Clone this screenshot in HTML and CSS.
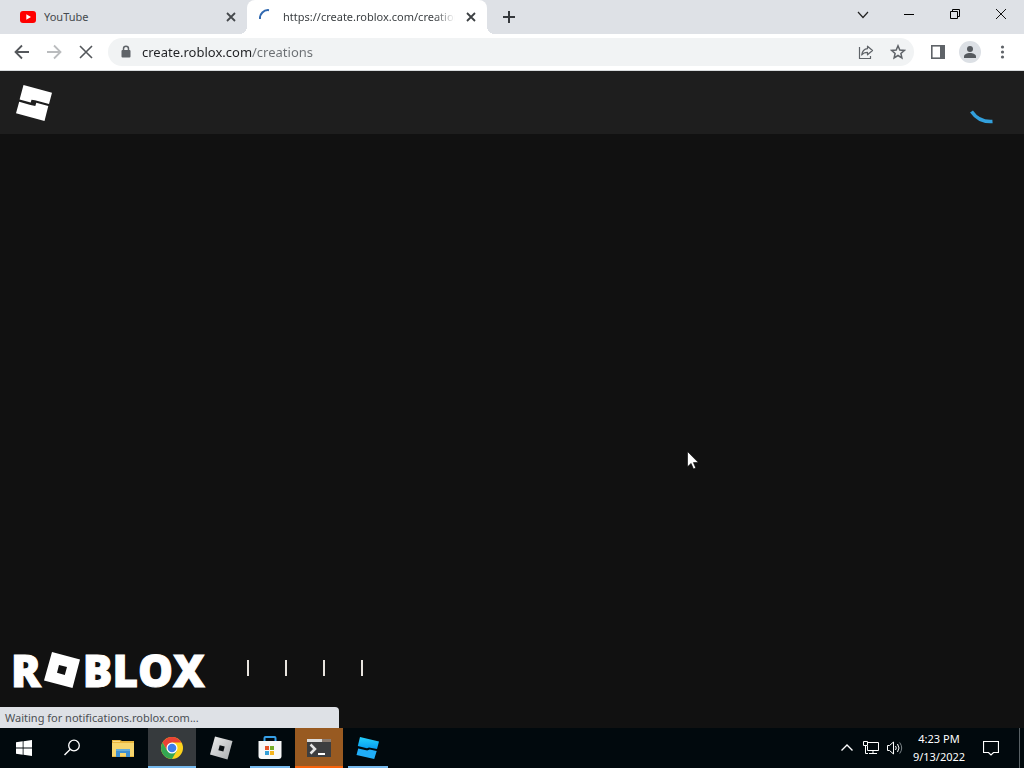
FILE: index.html
```html
<!DOCTYPE html>
<html lang="en">
<head>
<meta charset="utf-8">
<title>Creations</title>
<link rel="stylesheet" href="styles.css">
</head>
<body>
<div class="tabstrip">
  <div class="tab">
    <svg class="favicon" width="16" height="16" viewBox="0 0 16 16"><rect y="2" width="16" height="12" rx="3" fill="#f00"/><path d="M6.300 5.300v5.400L11 8z" fill="#fff"/></svg>
    <span class="tab-title">YouTube</span>
    <button class="tab-close" aria-label="Close YouTube"><svg width="16" height="16" viewBox="0 0 16 16"><path d="M4 4l8 8M12 4l-8 8" stroke="#45484c" stroke-width="1.800"/></svg></button>
  </div>
  <div class="tab tab-active">
    <svg class="favicon" width="16" height="16" viewBox="0 0 16 16"><path d="M1 10A8 8 0 0 1 10 1.200" fill="none" stroke="#3169b0" stroke-width="2"/></svg>
    <span class="tab-title tab-fade">https://create.roblox.com/creations</span>
    <button class="tab-close" aria-label="Close tab"><svg width="16" height="16" viewBox="0 0 16 16"><path d="M4 4l8 8M12 4l-8 8" stroke="#3c4043" stroke-width="1.800"/></svg></button>
  </div>
  <button class="new-tab" aria-label="New tab"><svg width="16" height="16" viewBox="0 0 16 16"><path d="M8 2v12M2 8h12" stroke="#35383c" stroke-width="2"/></svg></button>
  <div class="window-controls">
    <button aria-label="Search tabs"><svg width="16" height="16" viewBox="0 0 16 16"><path d="M3 5l5 5.500L13 5" fill="none" stroke="#222" stroke-width="1.200"/></svg></button>
    <button aria-label="Minimize"><svg width="16" height="16" viewBox="0 0 16 16"><path d="M3 7.500h10" stroke="#000"/></svg></button>
    <button aria-label="Restore"><svg width="16" height="16" viewBox="0 0 16 16"><path d="M3.500 4.500h7v7h-7zM5.500 4V2.500h7v7H11" fill="none" stroke="#000"/></svg></button>
    <button aria-label="Close"><svg width="16" height="16" viewBox="0 0 16 16"><path d="M3 2l10 10M13 2L3 12" stroke="#111"/></svg></button>
  </div>
</div>

<div class="toolbar">
  <button class="tool" aria-label="Back"><svg width="16" height="16" viewBox="0 0 16 16"><path d="M15 8H2M8 1.500L1.500 8 8 14.500" fill="none" stroke="#54575b" stroke-width="1.800"/></svg></button>
  <button class="tool" aria-label="Forward"><svg width="16" height="16" viewBox="0 0 16 16"><path d="M1 8h13M8 1.500L14.500 8 8 14.500" fill="none" stroke="#babcbe" stroke-width="1.800"/></svg></button>
  <button class="tool" aria-label="Stop loading"><svg width="16" height="16" viewBox="0 0 16 16"><path d="M2 2l12 12M14 2L2 14" stroke="#54575b" stroke-width="1.600"/></svg></button>
  <div class="omnibox">
    <svg class="lock" width="12" height="14" viewBox="0 0 12 14"><path d="M3.500 6V3.800a2.500 2.500 0 0 1 5 0V6" fill="none" stroke="#5f6368" stroke-width="1.500"/><rect x="1.500" y="5" width="9" height="7.500" rx="1" fill="#5f6368"/></svg>
    <input class="url" type="text" aria-label="Address" value="create.roblox.com/creations">
    <button class="tool" aria-label="Share"><svg width="16" height="16" viewBox="0 0 16 16"><path d="M1.500 3v11.500h11V12M9.500 2.200L14.500 6.500 9.500 10.800V8.300C7 8.300 5 9 3.700 11 4.200 7.500 6 5 9.500 4.700z" fill="none" stroke="#5f6368" stroke-width="1.200" stroke-linejoin="round"/></svg></button>
    <button class="tool" aria-label="Bookmark"><svg width="16" height="16" viewBox="0 0 16 16"><path d="M8 1.800l1.800 4.200 4.500.4-3.400 3 1 4.500L8 11.500l-3.900 2.400 1-4.500-3.400-3L6.200 6z" fill="none" stroke="#5f6368" stroke-width="1.500"/></svg></button>
  </div>
  <button class="tool" aria-label="Side panel"><svg width="16" height="16" viewBox="0 0 16 16"><rect x="1.800" y="1.800" width="12.400" height="12.400" fill="none" stroke="#5f6368" stroke-width="1.600"/><path d="M10 1h5v14h-5z" fill="#5f6368"/></svg></button>
  <button class="tool" aria-label="Profile"><svg width="22" height="22" viewBox="0 0 22 22"><circle cx="11" cy="11" r="11" fill="#dce0e5"/><circle cx="11" cy="8" r="3" fill="#565a5f"/><path d="M5 17v-1.500C5 13.300 8 12 11 12s6 1.300 6 3.500V17z" fill="#565a5f"/></svg></button>
  <button class="tool" aria-label="Menu"><svg width="16" height="16" viewBox="0 0 16 16" fill="#5f6368"><circle cx="8.500" cy="3" r="1.600"/><circle cx="8.500" cy="8" r="1.600"/><circle cx="8.500" cy="13" r="1.600"/></svg></button>
</div>

<main class="page">
  <header class="site-header">
    <a href="#" class="site-logo" aria-label="Creator home"><svg width="36" height="36" viewBox="0 0 36 36" fill="#fff"><path d="M7.500 0L36 7.800 33 19 19 15.300 15.500 14.800 14.700 17.600 3.600 14.600z"/><path d="M3.200 16.800L14.500 20l4.800 1.100 1-3.300 12 3.200L28.500 36 0 28.300z"/></svg></a>
    <svg class="spinner" width="24" height="16" viewBox="0 0 24 16"><path d="M1.500 1.500Q9 12.500 22.500 11.500" fill="none" stroke="#32a0dc" stroke-width="3.500"/></svg>
  </header>
  <footer class="site-footer">
    <a href="#" class="wordmark" aria-label="Roblox"><span>R</span><svg width="36" height="36" viewBox="0 0 36 36"><path fill="#fff" stroke="none" fill-rule="evenodd" d="M8 0L36 7.500 28.500 36 0 28.500zM15 13L13 20.800l7.800 2.200 2.200-8z"/></svg><span>BLOX</span></a>
    <div class="footer-links"><span></span><span></span><span></span><span></span></div>
  </footer>
  <div class="status">Waiting for notifications.roblox.com...</div>
  <svg class="cursor" width="12" height="19" viewBox="0 0 12 19"><path d="M.500.500v15.300l3.600-3.400L6.500 18l2.300-1-2.400-5.400h5z" fill="#fff" stroke="#000" stroke-width=".600"/></svg>
</main>

<div class="taskbar">
  <button class="task" aria-label="Start"><svg width="16" height="16" viewBox="0 0 16 16" fill="#fff"><path d="M0 2.200L6.700 1.300v6.300H0zM7.500 1.200L16 0v7.600H7.500zM0 8.400h6.700v6.300L0 13.800zM7.500 8.400H16V16l-8.500-1.200z"/></svg></button>
  <button class="task" aria-label="Search"><svg width="18" height="18" viewBox="0 0 18 18"><circle cx="11" cy="6.500" r="5.300" fill="none" stroke="#fff" stroke-width="1.300"/><path d="M7.300 10.300L1.500 16" stroke="#fff" stroke-width="1.400"/></svg></button>
  <div class="apps">
    <button class="task" aria-label="File Explorer"><svg width="22" height="20" viewBox="0 0 22 20"><path d="M0 2h8l2 1h12v16H0z" fill="#e9b63e"/><path d="M0 5h22v13H0z" fill="#f7d66e"/><path d="M1 3h7v1H1z" fill="#f8dc8b"/><path d="M4 11h14v8h-4v-4H8v4H4z" fill="#3f8fd0"/><path d="M4 11h14v2H4z" fill="#65acd9"/></svg></button>
    <button class="task task-current" aria-label="Chrome"><svg width="24" height="24" viewBox="0 0 24 24"><circle cx="12" cy="12" r="11" fill="#fdd31d"/><path d="M2.500 6.500A11 11 0 0 1 21.500 6.500H12L7.300 14.800z" fill="#ea4335"/><path d="M2.500 6.500A11 11 0 0 0 12 23l4.800-8.200L12 17l-4.700-2.200z" fill="#34a853"/><circle cx="12" cy="12" r="5.500" fill="#fff"/><circle cx="12" cy="12" r="4.300" fill="#3e7eea"/></svg></button>
    <button class="task" aria-label="Roblox"><svg width="24" height="24" viewBox="0 0 24 24"><defs><linearGradient id="silver" x2="1" y2="1"><stop stop-color="#f0f0f0"/><stop offset="1" stop-color="#a8abad"/></linearGradient></defs><path d="M6 .500l17.500 4.500L18.500 23.500 1 18.500z" fill="url(#silver)"/><path d="M10.700 9.300l5 1.300-1.300 5-5-1.300z" fill="#080d10"/></svg></button>
    <button class="task task-open" aria-label="Microsoft Store"><svg width="24" height="24" viewBox="0 0 24 24"><path d="M6.500 6V2q0-1 1-1h9q1 0 1 1v4" fill="none" stroke="#36a0e8" stroke-width="2"/><path d="M.500 5h23v15q0 3-3 3h-17q-3 0-3-3z" fill="#f7f8f8"/><path d="M7 10h4v4H7z" fill="#e5542a"/><path d="M12 10h4v4h-4z" fill="#75ad27"/><path d="M7 15h4v4H7z" fill="#35a0d8"/><path d="M12 15h4v4h-4z" fill="#f5b51d"/></svg></button>
    <button class="task task-alert" aria-label="Terminal"><svg width="24" height="20" viewBox="0 0 24 20"><path d="M0 1h24v18H0z" fill="#3d3e40"/><path d="M0 1h24v3H0z" fill="#8a7b70"/><path d="M0 1h15v3H0z" fill="#ddd"/><path d="M3.500 6.500L8 11l-4.500 4.500" fill="none" stroke="#e4e4e4" stroke-width="2.500"/><path d="M11 16h7" stroke="#fff" stroke-width="2"/></svg></button>
    <button class="task task-open" aria-label="Roblox Studio"><svg width="24" height="24" viewBox="0 0 24 24"><defs><linearGradient id="blue" x2="0" y2="1"><stop stop-color="#24d0fc"/><stop offset="1" stop-color="#079cf0"/></linearGradient></defs><path d="M4 1l19 4.500-2 7.500-8-1.500-2 .800L1.800 10z" fill="url(#blue)"/><path d="M2.200 12.500l9 2 2.500-1 7 1.500-2.500 8L.500 19z" fill="#20aef8"/></svg></button>
  </div>
  <div class="tray">
    <button class="tray-icon" aria-label="Show hidden icons"><svg width="16" height="16" viewBox="0 0 16 16"><path d="M2.500 10.500L8 5l5.500 5.500" fill="none" stroke="#fff" stroke-width="1.400"/></svg></button>
    <button class="tray-icon" aria-label="Network"><svg width="16" height="16" viewBox="0 0 16 16"><path d="M5 2.500h10.500v8h-11V6M10 11v2.500M6 13.500h8M.500 1.500h4v4h-4zM2.500 5.500v8H5" fill="none" stroke="#fff"/></svg></button>
    <button class="tray-icon" aria-label="Volume"><svg width="16" height="16" viewBox="0 0 16 16" fill="none" stroke="#fff"><path d="M.500 5.500h2L6.500 2v12l-4-3.500h-2z"/><path d="M8.500 6q1.500 2 0 4M10.500 4q3 4 0 8"/><path d="M12.700 2.500q4 5.500 0 11" stroke="#7d8589"/></svg></button>
    <time class="clock"><span>4:23 PM</span><span>9/13/2022</span></time>
    <button class="notices" aria-label="Notifications"><svg width="16" height="16" viewBox="0 0 16 16"><path d="M.500 1.500h15v11h-5l-2.500 2.500-2.500-2.500h-5z" fill="none" stroke="#fff" stroke-width="1.200"/></svg></button>
    <button class="show-desktop" aria-label="Show desktop"></button>
  </div>
</div>
</body>
</html>
```
FILE: styles.css
```css
* { box-sizing: border-box; }
body {
  margin: 0;
  height: 100vh;
  display: flex;
  flex-direction: column;
  overflow: hidden;
  background: #111;
  font: 11px/16px "Noto Sans", "Open Sans", sans-serif;
}
button {
  display: flex;
  align-items: center;
  justify-content: center;
  flex: none;
  border: 0;
  padding: 0;
  background: none;
}
svg { display: block; flex: none; }

.tabstrip {
  display: flex;
  flex: none;
  height: 34px;
  background: #dee1e6;
}
.tab {
  display: flex;
  align-items: center;
  width: 247px;
  padding: 0 8px 0 20px;
  gap: 8px;
  color: #45494d;
}
.tab-active {
  position: relative;
  width: 240px;
  padding-left: 12px;
  background: #fff;
  border-radius: 8px 8px 0 0;
  color: #3c4043;
}
.tab-active::before,
.tab-active::after {
  content: "";
  position: absolute;
  bottom: 0;
  width: 8px;
  height: 8px;
}
.tab-active::before {
  left: -8px;
  background: radial-gradient(circle at 0 0, transparent 8px, #fff 8px);
}
.tab-active::after {
  right: -8px;
  background: radial-gradient(circle at 100% 0, transparent 8px, #fff 8px);
}
.tab-title {
  flex: 1;
  min-width: 0;
  overflow: hidden;
  white-space: nowrap;
}
.tab-fade { mask-image: linear-gradient(to right, #000 88%, transparent); }
.tab-close { width: 16px; height: 16px; }
.new-tab { width: 28px; margin-left: 8px; }
.window-controls { display: flex; margin-left: auto; padding-bottom: 4px; }
.window-controls button { width: 46px; }

.toolbar {
  display: flex;
  align-items: center;
  flex: none;
  height: 37px;
  padding: 0 6px;
  background: #fff;
  border-bottom: 1px solid #d8dbdd;
}
.tool { width: 32px; height: 28px; }
.omnibox {
  display: flex;
  align-items: center;
  flex: 1;
  height: 28px;
  margin: 0 8px 0 6px;
  padding-left: 12px;
  border-radius: 14px;
  background: #f1f3f4;
}
.url {
  flex: 1;
  min-width: 0;
  margin-left: 10px;
  padding: 0;
  border: 0;
  outline: 0;
  font: 13px/20px "Noto Sans", "Open Sans", sans-serif;
  color: transparent;
  background: linear-gradient(to right, #202124 110px, #6b6f73 110px);
  background-clip: text;
}

.page {
  position: relative;
  flex: 1;
  min-height: 0;
  display: flex;
  flex-direction: column;
}
.site-header {
  display: flex;
  align-items: center;
  justify-content: space-between;
  height: 63px;
  padding: 0 30px 0 16px;
  background: #1e1e1e;
}
.spinner { align-self: flex-end; margin-bottom: 8px; }
.site-footer {
  display: flex;
  align-items: center;
  margin-top: auto;
  padding: 0 11px 40px;
}
.wordmark {
  display: flex;
  align-items: center;
  gap: 3px;
  color: #fff;
  text-decoration: none;
  font: 800 44px/36px "Open Sans", sans-serif;
  -webkit-text-stroke: 1px #fff;
}
.footer-links { display: flex; gap: 36px; margin-left: 42px; padding-bottom: 4px; }
.footer-links span { width: 2px; height: 16px; background: #e8e4de; }
.status {
  position: absolute;
  left: 0;
  bottom: 0;
  width: 339px;
  padding: 3px 5px 2px;
  border-radius: 0 4px 0 0;
  background: #dee1e6;
  color: #4b4f53;
}
.cursor { position: absolute; left: 687px; top: 380px; }

.taskbar {
  display: flex;
  flex: none;
  height: 40px;
  background: #01090d;
  color: #fff;
}
.task { width: 48px; }
.apps { display: flex; gap: 1px; margin-left: 3px; }
.task-current { background: linear-gradient(#76b9ed, #76b9ed) bottom / 100% 2px no-repeat #363a3d; }
.task-open { background: linear-gradient(#76b9ed, #76b9ed) bottom / 40px 2px no-repeat; }
.task-alert { background: linear-gradient(#f7630c, #f7630c) bottom / 100% 2px no-repeat #985a21; }
.tray { display: flex; margin-left: auto; }
.tray-icon { width: 24px; }
.clock {
  display: flex;
  flex-direction: column;
  justify-content: center;
  width: 64px;
  line-height: 18px;
  text-align: center;
}
.notices { width: 40px; }
.show-desktop { width: 5px; margin-left: 8px; border-left: 1px solid #596165; }
```
